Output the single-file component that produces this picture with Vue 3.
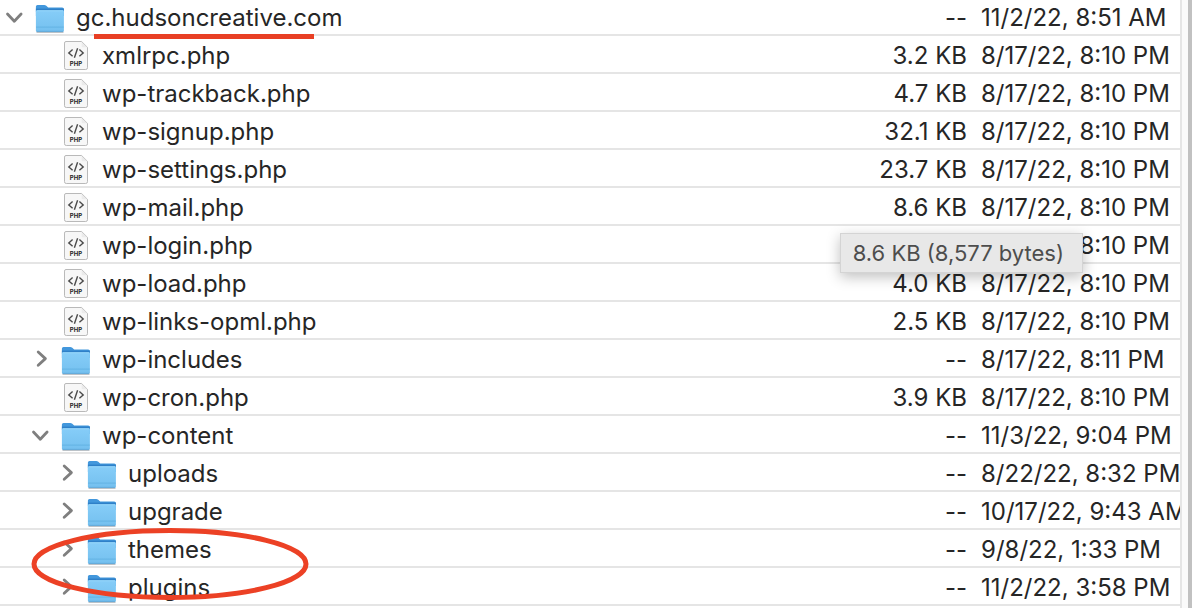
<script setup>
import { ref } from 'vue'

const fileDate = '8/17/22, 8:10 PM'
const php = (name, size) => ({ name, size, date: fileDate, depth: 1, kind: 'php' })
const folder = (name, date, depth, open = false) => ({ name, size: '--', date, depth, kind: 'folder', open })

const rows = ref([
  { ...folder('gc.hudsoncreative.com', '11/2/22, 8:51 AM', 0, true), marked: true },
  php('xmlrpc.php', '3.2 KB'),
  php('wp-trackback.php', '4.7 KB'),
  php('wp-signup.php', '32.1 KB'),
  php('wp-settings.php', '23.7 KB'),
  { ...php('wp-mail.php', '8.6 KB'), tip: '8.6 KB (8,577 bytes)' },
  php('wp-login.php', ''),
  php('wp-load.php', '4.0 KB'),
  php('wp-links-opml.php', '2.5 KB'),
  folder('wp-includes', '8/17/22, 8:11 PM', 1),
  php('wp-cron.php', '3.9 KB'),
  folder('wp-content', '11/3/22, 9:04 PM', 1, true),
  folder('uploads', '8/22/22, 8:32 PM', 2),
  folder('upgrade', '10/17/22, 9:43 AM', 2),
  { ...folder('themes', '9/8/22, 1:33 PM', 2), circled: true },
  folder('plugins', '11/2/22, 3:58 PM', 2)
])
</script>

<template>
  <main class="browser">
    <svg class="defs" aria-hidden="true">
      <defs>
        <linearGradient id="folder-front" x1="0" y1="0" x2="0" y2="1">
          <stop offset="0" stop-color="#86cdf8" />
          <stop offset="1" stop-color="#74c0ef" />
        </linearGradient>
      </defs>
    </svg>
    <div class="list">
      <table>
        <colgroup>
          <col />
          <col class="size-col" />
          <col class="date-col" />
        </colgroup>
        <tbody>
          <tr v-for="row in rows" :key="row.name">
            <td>
              <div class="name" :class="'depth-' + row.depth">
                <button
                  v-if="row.kind === 'folder'"
                  class="toggle"
                  type="button"
                  :aria-label="'Toggle ' + row.name"
                  :aria-expanded="row.open"
                  @click="row.open = !row.open"
                >
                  <svg width="20" height="20" viewBox="0 0 20 20">
                    <path :d="row.open ? 'M2.5 6 L9.3 13.2 L16.1 6' : 'M7.2 2 L14.4 8.6 L7.2 15.2'" />
                  </svg>
                </button>
                <span v-else class="toggle"></span>
                <svg v-if="row.kind === 'folder'" class="icon" width="30" height="32" viewBox="0 0 30 32" aria-hidden="true">
                  <path d="M1.5 30.3 H28.5" stroke="#b4bcc2" stroke-width="1.2" />
                  <path d="M0.9 4.6 Q0.9 3 2.5 3 H9.2 Q10.4 3 11.3 3.8 L12.6 4.9 Q13.2 5.4 14 5.4 H27.1 Q28.9 5.4 28.9 7 V14 H0.9 Z" fill="#4297dc" />
                  <path d="M0.9 6.6 H28.9 V9 H0.9 Z" fill="#2f80c8" />
                  <path d="M0.9 9.2 Q1.1 8.2 2.2 8.2 H27.6 Q28.7 8.2 28.9 9.2 V28.2 Q28.9 29.8 27.4 29.8 H2.4 Q0.9 29.8 0.9 28.2 Z" fill="url(#folder-front)" />
                  <path d="M1.6 8.8 H28.2" stroke="#9ad8fb" stroke-width="0.9" />
                  <path d="M1.1 25.1 H28.7" stroke="#5eaee0" stroke-width="0.8" />
                  <path d="M1.5 29.4 H28.3" stroke="#559fd2" stroke-width="0.8" />
                </svg>
                <svg v-else class="icon" width="30" height="32" viewBox="0 0 30 32" aria-hidden="true">
                  <path d="M5 1.5 H20.6 L26.5 7.4 V27.7 Q26.5 29.5 24.7 29.5 H5.3 Q3.5 29.5 3.5 27.7 V3.1 Q3.5 1.5 5 1.5 Z" fill="#f7f7f7" stroke="#b9b9b9" />
                  <path d="M20.6 1.9 V6.2 Q20.6 7.3 21.8 7.3 H26.1 Z" fill="#ebebeb" />
                  <path d="M11.6 9.5 L7.8 12.9 L11.6 16.3 M18.4 9.5 L22.2 12.9 L18.4 16.3 M16.6 8.2 L13.4 17.8" fill="none" stroke="#4b4b4b" stroke-width="1.4" />
                  <text x="15" y="26" text-anchor="middle">PHP</text>
                </svg>
                <span class="label" :class="{ marked: row.marked }">{{ row.name }}</span>
                <svg v-if="row.circled" class="circle" width="278" height="72" viewBox="0 0 278 72" aria-hidden="true">
                  <ellipse cx="139" cy="36" rx="136" ry="33.5" />
                </svg>
              </div>
            </td>
            <td class="size">
              {{ row.size }}
              <span v-if="row.tip" class="tip" role="tooltip">{{ row.tip }}</span>
            </td>
            <td class="date">{{ row.date }}</td>
          </tr>
        </tbody>
      </table>
    </div>
    <div class="gutter"></div>
  </main>
</template>

<style>
body {
  margin: 0;
  background: #fff;
}
</style>

<style scoped>
.browser {
  display: flex;
  height: 100vh;
  overflow: hidden;
  background: #fff;
  color: #262626;
  font: 24px/32px Inter, "Liberation Sans", sans-serif;
}
.defs {
  position: absolute;
  width: 0;
  height: 0;
}
.list {
  flex: 1;
  min-width: 0;
  margin-top: -2px;
  overflow: hidden;
}
.gutter {
  box-sizing: border-box;
  width: 12px;
  border-left: 2px solid #e5e5e5;
  border-right: 4px solid #c1c1c1;
  background: #fafafa;
}
table {
  width: 100%;
  table-layout: fixed;
  border-collapse: separate;
  border-spacing: 0;
}
.size-col {
  width: 140px;
}
.date-col {
  width: 199px;
}
td {
  height: 32px;
  padding: 4px 0 0;
  border-bottom: 2px solid #e5e5e5;
  white-space: nowrap;
}
.name {
  position: relative;
  display: flex;
  align-items: center;
  height: 32px;
  padding-left: 5px;
}
.depth-1 {
  padding-left: 31px;
}
.depth-2 {
  padding-left: 57px;
}
.toggle {
  display: flex;
  width: 20px;
  height: 20px;
  margin-right: 10px;
  padding: 0;
  border: 0;
  background: none;
}
.toggle path {
  fill: none;
  stroke: #7f7f7f;
  stroke-width: 2.8;
  stroke-linecap: round;
  stroke-linejoin: round;
}
.icon {
  flex: none;
  margin-right: 11px;
}
.icon text {
  fill: #1f1f1f;
  font: 700 6px Inter, sans-serif;
}
.label {
  position: relative;
}
.marked::after {
  content: "";
  position: absolute;
  left: 18px;
  right: 28px;
  top: 32px;
  height: 5px;
  background: #e83f24;
  z-index: 1;
}
.circle {
  position: absolute;
  left: 31px;
  top: -6px;
  z-index: 2;
}
.circle ellipse {
  fill: none;
  stroke: #ec4125;
  stroke-width: 5;
}
.size {
  position: relative;
  padding-right: 14px;
  text-align: right;
}
.date {
  overflow: hidden;
}
.tip {
  position: absolute;
  top: 45px;
  right: -102px;
  z-index: 3;
  padding: 0 18px 0 12px;
  border: 1px solid #d4d4d4;
  background: #e8e8e8;
  box-shadow: 0 4px 14px rgba(0, 0, 0, 0.25);
  color: #4d4d4d;
  font-size: 22px;
  line-height: 38px;
}
</style>
